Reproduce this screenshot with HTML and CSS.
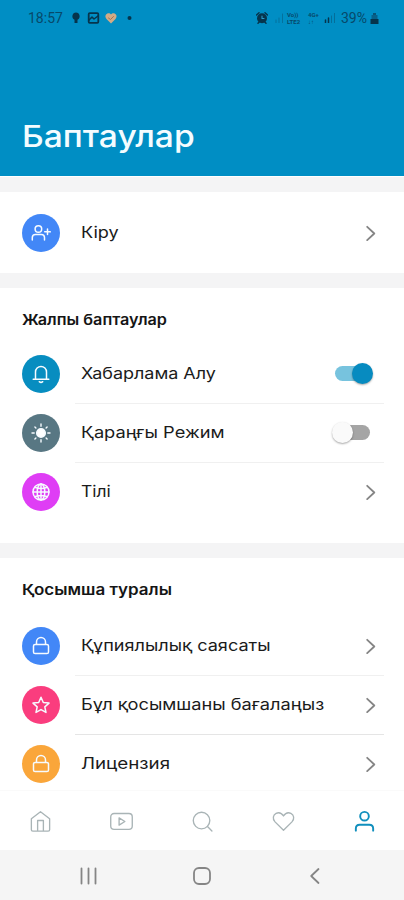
FILE: index.html
```html
<!DOCTYPE html>
<html lang="kk">
<head>
<meta charset="utf-8">
<title>Баптаулар</title>
<link rel="stylesheet" href="styles.css">
</head>
<body>
<svg width="0" height="0" class="defs">
  <symbol id="chevron" viewBox="0 0 10 16"><path d="M1.200 1.800 8.300 8.500l-7.100 6.700"/></symbol>
  <symbol id="lock" viewBox="0 0 20 20"><rect x="2.500" y="8.500" width="15" height="9" rx="1.600"/><path d="M5.500 8.300V6a4.500 4.500 0 0 1 9 0v2.300"/></symbol>
</svg>
<div class="screen">
  <header class="header">
    <div class="status">
      <span class="time">18:57</span>
      <svg class="notes" width="62" height="14" viewBox="0 0 62 14">
        <path d="M5 1.500a3.800 3.800 0 0 0-1.500 7.200V12h3V8.700A3.800 3.800 0 0 0 5 1.500z" fill="#06344c"/>
        <rect x="17.700" y="2.200" width="9.600" height="9.600" rx="1" fill="none" stroke="#06344c" stroke-width="1.800"/><path d="m18 9 3-3 2 2 4-3" fill="none" stroke="#06344c" stroke-width="1.500"/>
        <path d="M40 12.500 35.500 8C32 3.500 38 .5 40 3.500c2-3 8 0 4.500 4.500z" fill="#d3ab86"/><path d="m37.500 7 2 1.500 3-3" fill="none" stroke="#a8724f"/>
        <circle cx="58.500" cy="7" r="2" fill="#06344c"/>
      </svg>
      <span class="spacer"></span>
      <svg class="alarm" width="12" height="12" viewBox="0 0 12 12"><circle cx="6" cy="6.300" r="5" fill="#06344c"/><path d="M.5 3 3 .8M11.500 3 9 .8M2 11.200l1.500-1.500M10 11.200 8.500 9.700" stroke="#06344c" stroke-width="1.500"/><path d="M6 4v2.500h2" stroke="#2a9ccb" stroke-width="1.100"/></svg>
      <svg class="signal" width="9" height="10" viewBox="0 0 9 10"><path d="M1 7v3M4 5v5M7.500 1v9" stroke="#07597e" stroke-width="1" opacity=".55"/></svg>
      <span class="lte"><span>Vo))</span><span>LTE2</span></span>
      <span class="lte fourg"><span>4G+</span><span>↓↑</span></span>
      <svg class="signal" width="12" height="10" viewBox="0 0 12 10"><path d="M1.500 7v3M4.500 5v5" stroke="#06344c" stroke-width="1.500"/><path d="M7.500 3v7M10.500 0v10" stroke="#07597e" opacity=".6"/></svg>
      <span class="percent">39%</span>
      <svg class="battery" width="9" height="12" viewBox="0 0 9 12"><path d="M3 1h3v2H3z" fill="#075478"/><path d="M1.500 3h6v4h-6z" fill="#07618a"/><path d="M.5 7h8v5h-8z" fill="#06344c"/></svg>
    </div>
    <h1>Баптаулар</h1>
  </header>

  <main class="content">
    <section class="card account">
      <div class="row">
        <span class="badge blue"><svg viewBox="0 0 20 20"><circle cx="7.400" cy="6" r="3.300"/><path d="M1.300 17v-2.400c0-2 1.400-3.200 3.200-3.200h5.800c1.800 0 3.200 1.200 3.200 3.200V17M16.500 6v5.600M13.700 8.800h5.600"/></svg></span>
        <span class="label t-login">Кіру</span><svg class="chev"><use href="#chevron"/></svg>
      </div>
    </section>

    <section class="card general">
      <h2 class="t-general">Жалпы баптаулар</h2>
      <div class="row lined">
        <span class="badge cyan"><svg viewBox="0 0 20 20"><path d="M2.200 15.200h15.600M4.500 15V7.900a5.500 5.500 0 0 1 11 0V15M8.300 17.700q1.700 1.400 3.400 0"/></svg></span>
        <span class="label t-notify">Хабарлама Алу</span><span class="switch on"></span>
      </div>
      <div class="row lined">
        <span class="badge slate"><svg viewBox="0 0 20 20"><circle cx="10" cy="10" r="4.300" fill="#fff"/><path class="rays" d="M10 1v2.200M10 16.800V19M1 10h2.200M16.800 10H19M3.900 3.900l1 1M15.100 15.100l1 1M3.900 16.100l1-1M15.100 4.900l1-1"/></svg></span>
        <span class="label t-dark">Қараңғы Режим</span><span class="switch"></span>
      </div>
      <div class="row">
        <span class="badge pink"><svg viewBox="0 0 20 20"><circle cx="10" cy="10" r="8"/><ellipse cx="10" cy="10" rx="3.800" ry="8"/><path d="M10 2v16M2 10h16M3.700 5.200q6.300 2.600 12.600 0M3.700 14.800q6.300-2.600 12.600 0"/></svg></span>
        <span class="label t-lang">Тілі</span><svg class="chev"><use href="#chevron"/></svg>
      </div>
    </section>

    <section class="card about">
      <h2 class="t-about">Қосымша туралы</h2>
      <div class="row lined">
        <span class="badge blue"><svg viewBox="0 0 20 20"><use href="#lock"/></svg></span>
        <span class="label t-privacy">Құпиялылық саясаты</span><svg class="chev"><use href="#chevron"/></svg>
      </div>
      <div class="row lined strong">
        <span class="badge rose"><svg viewBox="0 0 20 20"><path d="m10 2.300 2.300 5.200 5.700.6-4.200 3.800 1.200 5.500-5-2.800-5 2.800 1.200-5.500L2 8.100l5.700-.6z"/></svg></span>
        <span class="label t-rate">Бұл қосымшаны бағалаңыз</span><svg class="chev"><use href="#chevron"/></svg>
      </div>
      <div class="row">
        <span class="badge orange"><svg viewBox="0 0 20 20"><use href="#lock"/></svg></span>
        <span class="label t-license">Лицензия</span><svg class="chev"><use href="#chevron"/></svg>
      </div>
    </section>
  </main>

  <nav class="tabs">
    <svg viewBox="0 0 26 26"><path d="M3.500 10.200 13 2.800l9.500 7.400v11.300a1.500 1.500 0 0 1-1.500 1.500H5a1.500 1.500 0 0 1-1.500-1.500zM10 23V12h6v11"/></svg>
    <svg viewBox="0 0 26 26"><rect x="1.800" y="4.700" width="22.400" height="16.500" rx="3.500"/><path d="M10.500 9.200v7.600l6-3.800z"/></svg>
    <svg viewBox="0 0 26 26"><circle cx="12" cy="12" r="8.600"/><path d="m18.200 18.200 4.600 4.600"/></svg>
    <svg viewBox="0 0 26 26"><path d="M13 22.200 4.200 13.400C1.200 10.200 2.200 6 5.300 4.500c3-1.400 6 .1 7.700 2.700 1.700-2.600 4.700-4.100 7.700-2.700 3.100 1.500 4.100 5.700 1.100 8.900z"/></svg>
    <svg class="active" viewBox="0 0 26 26"><circle cx="13" cy="7.500" r="4.500"/><path d="M4 22.500v-2.200c0-2.500 1.700-4 4-4h10c2.300 0 4 1.500 4 4v2.200"/></svg>
  </nav>
  <div class="system">
    <svg viewBox="0 0 20 20"><path d="M3.500 2.500v15M10.500 2.500v15M17.500 2.500v15"/></svg>
    <svg viewBox="0 0 20 20"><rect x="2" y="2" width="16" height="16" rx="5"/></svg>
    <svg viewBox="0 0 20 20"><path d="m13.500 3-7.300 7 7.300 7"/></svg>
  </div>
</div>
</body>
</html>
```
FILE: styles.css
```css
* { box-sizing: border-box; }
body { margin: 0; background: #fff; color: #1b1b1b; font-family: Inter, "Noto Sans", sans-serif; }
.defs { display: block; position: absolute; }
svg { fill: none; stroke-linecap: round; stroke-linejoin: round; flex: none; }
.screen { width: 404px; height: 900px; display: flex; flex-direction: column; overflow: hidden; }

.header { flex: none; height: 176px; background: #008ec4; display: flex; flex-direction: column; align-items: flex-start; }
.status { width: 100%; height: 36px; padding: 0 25px 0 28px; display: flex; align-items: center; color: #07496a; font: 14px/36px Roboto, sans-serif; }
.time { width: 37px; }
.notes { margin-left: 6px; }
.spacer { flex: 1; }
.signal { margin-left: 7px; }
.lte { display: flex; flex-direction: column; margin-left: 3px; font-size: 6px; line-height: 7px; font-weight: 700; width: 18px; }
.fourg { width: 13px; }
.fourg + .signal { margin-left: 3px; }
.percent { margin-left: 5px; width: 28px; }
.battery { margin-left: 1px; }
h1, h2, .label { transform-origin: 0 50%; white-space: nowrap; }
h1 { margin: 80px 0 0 22px; font-size: 30px; line-height: 40px; font-weight: 500; color: #f4fcff; transform: scaleX(1.12); }

.content { flex: 1; min-height: 0; overflow: hidden; padding-top: 15px; display: flex; flex-direction: column; gap: 15px; background: #f4f4f5; border-top: 1px solid #fff; }
.card { flex: none; background: #fff; padding: 0 20px 0 21.5px; }
.account { height: 81px; padding-top: 11px; }
.general, .about { height: 255px; }
h2 { margin: 0; width: max-content; height: 56px; padding-top: 22px; font-size: 15px; line-height: 20px; font-weight: 600; color: #151515; }
.about h2 { height: 58px; }
.row { height: 59px; display: flex; align-items: center; position: relative; }
.lined::after { content: ""; position: absolute; left: 53px; right: 0; bottom: -1px; height: 1px; background: #f0f0f0; }
.strong::after { background: #e5e5e5; }
.badge { width: 38px; height: 38px; border-radius: 50%; display: flex; align-items: center; justify-content: center; flex: none; }
.badge svg { width: 20px; height: 20px; stroke: #f6fbff; stroke-width: 1.5; }
.badge .rays { stroke-width: 1.4; }
.blue { background: #4287f7; }
.cyan { background: #078dc0; }
.slate { background: #587783; }
.pink { background: #df3df5; }
.rose { background: #fa3d7e; }
.orange { background: #faa63a; }
.label { margin: -2px auto 0 21px; font-size: 16px; line-height: 24px; }
.t-login { transform: scaleX(1.13); }
.t-general { transform: scaleX(1.08); }
.t-notify { transform: scaleX(1.122); }
.t-dark { transform: scaleX(1.14); }
.t-lang { transform: scaleX(1.09); }
.t-about { transform: scaleX(1.132); }
.t-privacy { transform: scaleX(1.13); }
.t-rate { transform: scaleX(1.138); }
.t-license { transform: scaleX(1.172); }
.chev { width: 10px; height: 16px; margin-right: 8px; stroke: #858585; stroke-width: 1.8; }
.switch { width: 35px; height: 15px; border-radius: 8px; background: #a5a5a5; position: relative; margin-right: 14px; }
.switch::after { content: ""; position: absolute; width: 21px; height: 21px; border-radius: 50%; top: -3px; left: -3px; background: #fafafa; box-shadow: 0 1px 2px rgba(0,0,0,.35); }
.switch.on { background: #77c3de; }
.switch.on::after { left: 17px; background: #078bc0; }

.tabs { flex: none; height: 60px; background: #fff; border-top: 1px solid #fafafa; display: flex; justify-content: space-between; align-items: center; padding: 1px 27px 0 28px; }
.tabs svg { width: 25px; height: 25px; stroke: #a9b4b6; stroke-width: 1.4; }
.tabs .active { stroke: #118fbd; stroke-width: 2; }
.system { flex: none; height: 50px; background: #f5f5f5; display: flex; justify-content: space-between; padding: 1px 79px 0 78px; align-items: center; }
.system svg { width: 20px; height: 20px; stroke: #858585; stroke-width: 1.8; }
```
